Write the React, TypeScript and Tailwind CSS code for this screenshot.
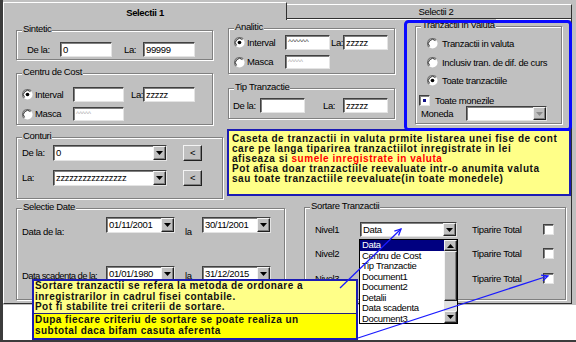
import type { ReactNode } from 'react'

const field =
  'bg-white border border-t-[#404040] border-l-[#404040] border-r-[#e4e4e4] border-b-[#e4e4e4] shadow-[inset_1px_1px_0_#808080]'
const raised =
  'bg-[#c0c0c0] border border-t-[#f4f4f4] border-l-[#f4f4f4] border-r-[#202020] border-b-[#202020] shadow-[inset_-1px_-1px_0_#808080]'

function Group({ title, className, children }: { title: string; className: string; children?: ReactNode }) {
  return (
    <div className={`relative shrink-0 border border-[#808080] shadow-[1px_1px_0_#fff,inset_1px_1px_0_#fff] ${className}`}>
      <span className="absolute -top-[8px] left-[5px] px-[1px] bg-[#c0c0c0] leading-[12px]">{title}</span>
      {children}
    </div>
  )
}

function Input({ className, children }: { className: string; children?: ReactNode }) {
  return <div className={`${field} shrink-0 pl-[2px] flex items-center overflow-hidden ${className}`}>{children}</div>
}

function Arrow({ dim }: { dim?: boolean }) {
  return (
    <div className={`${raised} w-[13px] h-full shrink-0 flex items-center justify-center`}>
      <svg width="7" height="4" viewBox="0 0 7 4">
        <path d="M0 0h7L3.5 4z" fill={dim ? '#8a8a8a' : '#000'} />
      </svg>
    </div>
  )
}

function Combo({ className, text, dim }: { className: string; text?: string; dim?: boolean }) {
  return (
    <div className={`${field} shrink-0 flex ${className}`}>
      <span className="flex-1 pl-[2px] flex items-center overflow-hidden">{text}</span>
      <Arrow dim={dim} />
    </div>
  )
}

function Radio({ on }: { on?: boolean }) {
  return (
    <svg width="11" height="11" viewBox="0 0 12 12" className="shrink-0">
      <circle cx="6" cy="6" r="5.5" fill="#fff" />
      <path d="M10 2A5.66 5.66 0 0 0 2 10" fill="none" stroke="#7a7a7a" strokeWidth="1.3" />
      <path d="M9.2 2.8A4.53 4.53 0 0 0 2.8 9.2" fill="none" stroke="#1a1a1a" strokeWidth="1" />
      {on && <circle cx="6" cy="6" r="2" fill="#000" />}
    </svg>
  )
}

function Check({ dot }: { dot?: boolean }) {
  return (
    <div className={`${field} w-[11px] h-[11px] shrink-0 flex items-center justify-center`}>
      {dot && <div className="w-[3px] h-[3px] bg-[#10108a]" />}
    </div>
  )
}

function head(x1: number, y1: number, x2: number, y2: number, len = 7) {
  const a = Math.atan2(y2 - y1, x2 - x1)
  const p = (s: number) => `${x2 - len * Math.cos(a + s)},${y2 - len * Math.sin(a + s)}`
  return `M${p(0.45)} L${x2},${y2} L${p(-0.45)}`
}

const listItems = ['Data', 'Centru de Cost', 'Tip Tranzactie', 'Document1', 'Document2', 'Detalii', 'Data scadenta', 'Document3']

export default function App() {
  return (
    <div className="relative w-[576px] h-[342px] overflow-hidden bg-white flex whitespace-nowrap text-black font-['Liberation_Sans',Arial,sans-serif] text-[9.5px] leading-[12px] tracking-[-0.35px]">
      <div className="w-[3px] shrink-0 bg-[#3c3c3c]" />
      <div className="flex-1 flex flex-col">
        <div className="bg-[#c0c0c0] pr-[4px] pb-[1px]">
          {/* tabs */}
          <div className="flex items-end h-[18px]">
            <div className="relative z-10 w-[284px] h-[18px] -mb-[2px] bg-[#c0c0c0] border-t border-l border-t-white border-l-white border-r border-r-[#303030] flex justify-center pt-[4px] font-bold">
              Selectii 1
            </div>
            <div className="w-[285px] h-[14px] border-t border-t-white border-r border-r-[#303030] flex justify-center pl-[14px] pt-[1px]">
              Selectii 2
            </div>
          </div>

          {/* panel */}
          <div className="h-[286px] border border-t-[#303030] border-l-white border-r-[#303030] border-b-[#303030] shadow-[inset_0_1px_0_#fff] pl-[12px]">
            <div className="flex items-start">
              <div className="flex flex-col w-[207px] shrink-0">
                <Group title="Sintetic" className="mt-[11px] w-[197px] h-[30px]">
                  <div className="flex items-center mt-[11px] pl-[10px]">
                    <span className="w-[33px]">De la:</span>
                    <Input className="w-[52px] h-[15px]">0</Input>
                    <span className="ml-[12px] w-[19px]">La:</span>
                    <Input className="w-[52px] h-[15px]">99999</Input>
                  </div>
                </Group>

                <Group title="Centru de Cost" className="mt-[13px] w-[197px] h-[52px]">
                  <div className="flex items-center mt-[13px] pl-[5px] h-[15px]">
                    <Radio on />
                    <span className="ml-[2px] w-[38px]">Interval</span>
                    <Input className="w-[51px] h-[15px]" />
                    <span className="ml-[7px] w-[12px]">La:</span>
                    <Input className="w-[52px] h-[15px]">zzzzz</Input>
                  </div>
                  <div className="flex items-center mt-[5px] pl-[5px] h-[14px]">
                    <Radio />
                    <span className="ml-[2px] w-[38px]">Masca</span>
                    <Input className="w-[51px] h-[14px] items-start text-[7px] text-[#a8a8a8]">^^^^^</Input>
                  </div>
                </Group>

                <Group title="Conturi" className="mt-[12px] w-[207px] h-[62px]">
                  <div className="flex items-center mt-[7px] pl-[5px]">
                    <span className="w-[31px]">De la:</span>
                    <Combo className="w-[114px] h-[16px]" text="0" />
                    <div className={`${raised} ml-[16px] w-[19px] h-[16px] flex items-center justify-center`}>&lt;</div>
                  </div>
                  <div className="flex items-center mt-[9px] pl-[5px]">
                    <span className="w-[31px]">La:</span>
                    <Combo className="w-[114px] h-[16px]" text="zzzzzzzzzzzzzzzz" />
                    <div className={`${raised} ml-[16px] w-[19px] h-[16px] flex items-center justify-center`}>&lt;</div>
                  </div>
                </Group>
              </div>

              <div className="flex flex-col ml-[5px] w-[167px] shrink-0">
                <Group title="Analitic" className="mt-[9px] h-[46px]">
                  <div className="flex items-center mt-[6px] pl-[5px] h-[15px]">
                    <Radio on />
                    <span className="ml-[2px] w-[38px]">Interval</span>
                    <Input className="w-[45px] h-[15px] items-start text-[8px] text-[#303030]">^^^^^^</Input>
                    <span className="ml-[1px] w-[12px]">La:</span>
                    <Input className="w-[45px] h-[15px]">zzzzz</Input>
                  </div>
                  <div className="flex items-center mt-[5px] pl-[5px] h-[14px]">
                    <Radio />
                    <span className="ml-[2px] w-[38px]">Masca</span>
                    <Input className="w-[45px] h-[14px] items-start text-[7px] text-[#a8a8a8]">^^^^^</Input>
                  </div>
                </Group>

                <Group title="Tip Tranzactie" className="mt-[14px] h-[31px]">
                  <div className="flex items-center mt-[9px] pl-[4px]">
                    <span className="w-[27px]">De la:</span>
                    <Input className="w-[45px] h-[15px]" />
                    <span className="ml-[18px] w-[20px]">La:</span>
                    <Input className="w-[45px] h-[15px]">zzzzz</Input>
                  </div>
                </Group>
              </div>

              <Group title="Tranzactii in Valuta" className="ml-[20px] mt-[7px] w-[147px] h-[98px]">
                <div className="flex flex-col pl-[11px]">
                  <div className="flex items-center mt-[11px] h-[11px]">
                    <Radio />
                    <span className="ml-[4px]">Tranzactii in valuta</span>
                  </div>
                  <div className="flex items-center mt-[8px] h-[11px]">
                    <Radio />
                    <span className="ml-[4px]">Inclusiv tran. de dif. de curs</span>
                  </div>
                  <div className="flex items-center mt-[7px] h-[11px]">
                    <Radio on />
                    <span className="ml-[4px]">Toate tranzactiile</span>
                  </div>
                  <div className="flex items-center mt-[9px] -ml-[8px] h-[11px]">
                    <Check dot />
                    <span className="ml-[5px]">Toate monezile</span>
                  </div>
                  <div className="flex items-center -ml-[6px] h-[15px]">
                    <span className="w-[45px]">Moneda</span>
                    <Combo className="w-[81px] h-[15px]" dim />
                  </div>
                </div>
              </Group>
            </div>

            <div className="flex items-start mt-[9px]">
              <Group title="Selectie Date" className="w-[269px] h-[92px]">
                <div className="flex items-start mt-[8px] pl-[5px]">
                  <span className="w-[84px] mt-[9px]">Data de la:</span>
                  <Combo className="w-[69px] h-[16px]" text="01/11/2001" />
                  <span className="ml-[10px] w-[17px] mt-[9px]">la</span>
                  <Combo className="w-[69px] h-[16px]" text="30/11/2001" />
                </div>
                <div className="flex items-start mt-[28px] pl-[5px]">
                  <span className="w-[84px] mt-[4px] tracking-[-0.6px]">Data scadenta de la:</span>
                  <Combo className="w-[69px] h-[16px]" text="01/01/1980" />
                  <span className="ml-[10px] w-[17px] mt-[4px]">la</span>
                  <Combo className="w-[69px] h-[16px]" text="31/12/2015" />
                </div>
              </Group>

              <Group title="Sortare Tranzactii" className="ml-[19px] -mt-[1px] w-[262px] h-[93px]">
                <div className="flex items-center mt-[14px] pl-[10px] h-[15px]">
                  <span className="w-[45px]">Nivel1</span>
                  <Combo className="w-[97px] h-[15px]" text="Data" />
                  <span className="ml-[15px] w-[71px]">Tiparire Total</span>
                  <Check />
                </div>
                <div className="flex items-center mt-[9px] pl-[10px] h-[15px]">
                  <span className="w-[45px]">Nivel2</span>
                  <div className="w-[97px]" />
                  <span className="ml-[15px] w-[71px]">Tiparire Total</span>
                  <Check />
                </div>
                <div className="flex items-center mt-[10px] pl-[10px] h-[15px]">
                  <span className="w-[45px]">Nivel3</span>
                  <div className="w-[97px]" />
                  <span className="ml-[15px] w-[71px]">Tiparire Total</span>
                  <Check />
                </div>
              </Group>
            </div>
          </div>
        </div>
        <div className="flex-1 border-b-2 border-[#3c3c3c]" />
      </div>

      {/* open dropdown list */}
      <div className="absolute left-[359px] top-[239px] w-[99px] h-[85px] border border-black bg-white flex">
        <div className="w-[84px] flex flex-col">
          {listItems.map((t, i) => (
            <div key={t} className={`h-[10.5px] leading-[10.5px] pl-[2px] ${i === 0 ? 'bg-[#000080] text-white' : ''}`}>
              {t}
            </div>
          ))}
        </div>
        <div className="w-[13px] flex flex-col bg-[#e0e0e0]">
          <div className={`${raised} h-[11px] flex items-center justify-center`}>
            <svg width="7" height="4" viewBox="0 0 7 4"><path d="M0 4h7L3.5 0z" fill="#000" /></svg>
          </div>
          <div className={`${raised} h-[50px]`} />
          <div className="flex-1" />
          <div className={`${raised} h-[12px] flex items-center justify-center`}>
            <svg width="7" height="4" viewBox="0 0 7 4"><path d="M0 0h7L3.5 4z" fill="#000" /></svg>
          </div>
        </div>
      </div>

      {/* callout 1 */}
      <div className="absolute left-[227px] top-[129px] w-[344px] h-[67px] border-2 border-[#1c1cb4] bg-[#ffff88] pl-[3px] pt-[3px] font-bold text-[10px] leading-[10px] tracking-[0.55px] text-[#111]">
        <div>Caseta de tranzactii in valuta prmite listarea unei fise de cont</div>
        <div>care pe langa tiparirea tranzactiilot inregistrate in lei</div>
        <div>
          afiseaza si <span className="text-[#ff0000]">sumele inregistrate in valuta</span>
        </div>
        <div>Pot afisa doar tranzactiile reevaluate intr-o anumita valuta</div>
        <div>sau toate tranzactiile reevaluate(in toate monedele)</div>
      </div>

      {/* callout 2 */}
      <div className="absolute left-[32px] top-[279px] w-[326px] h-[61px] border-2 border-[#1c1cb4] flex flex-col font-bold text-[10px] tracking-[0.45px] text-[#111]">
        <div className="h-[32px] bg-[#ffff88] pl-[1px] leading-[10.5px]">
          <div>Sortare tranzactii se refera la metoda de ordonare a</div>
          <div>inregistrarilor in cadrul fisei contabile.</div>
          <div>Pot fi stabilite trei criterii de sortare.</div>
        </div>
        <div className="h-[1px] bg-[#202080]" />
        <div className="flex-1 bg-[#ffff00] pl-[1px] leading-[11px]">
          <div>Dupa fiecare criteriu de sortare se poate realiza un</div>
          <div>subtotal daca bifam casuta aferenta</div>
        </div>
      </div>

      {/* hand drawn highlight and arrows */}
      <svg className="absolute inset-0 pointer-events-none" width="576" height="342" viewBox="0 0 576 342">
        <rect x="405.5" y="21.5" width="165" height="108" rx="3" fill="none" stroke="#0a0aff" strokeWidth="3" />
        <g fill="none" stroke="#1a1aff" strokeWidth="1.3">
          <path d="M340 288 L401 229" />
          <path d={head(340, 288, 401, 229)} />
          <path d="M358 338 L548 276" />
          <path d={head(358, 338, 548, 276)} />
        </g>
      </svg>
    </div>
  )
}
